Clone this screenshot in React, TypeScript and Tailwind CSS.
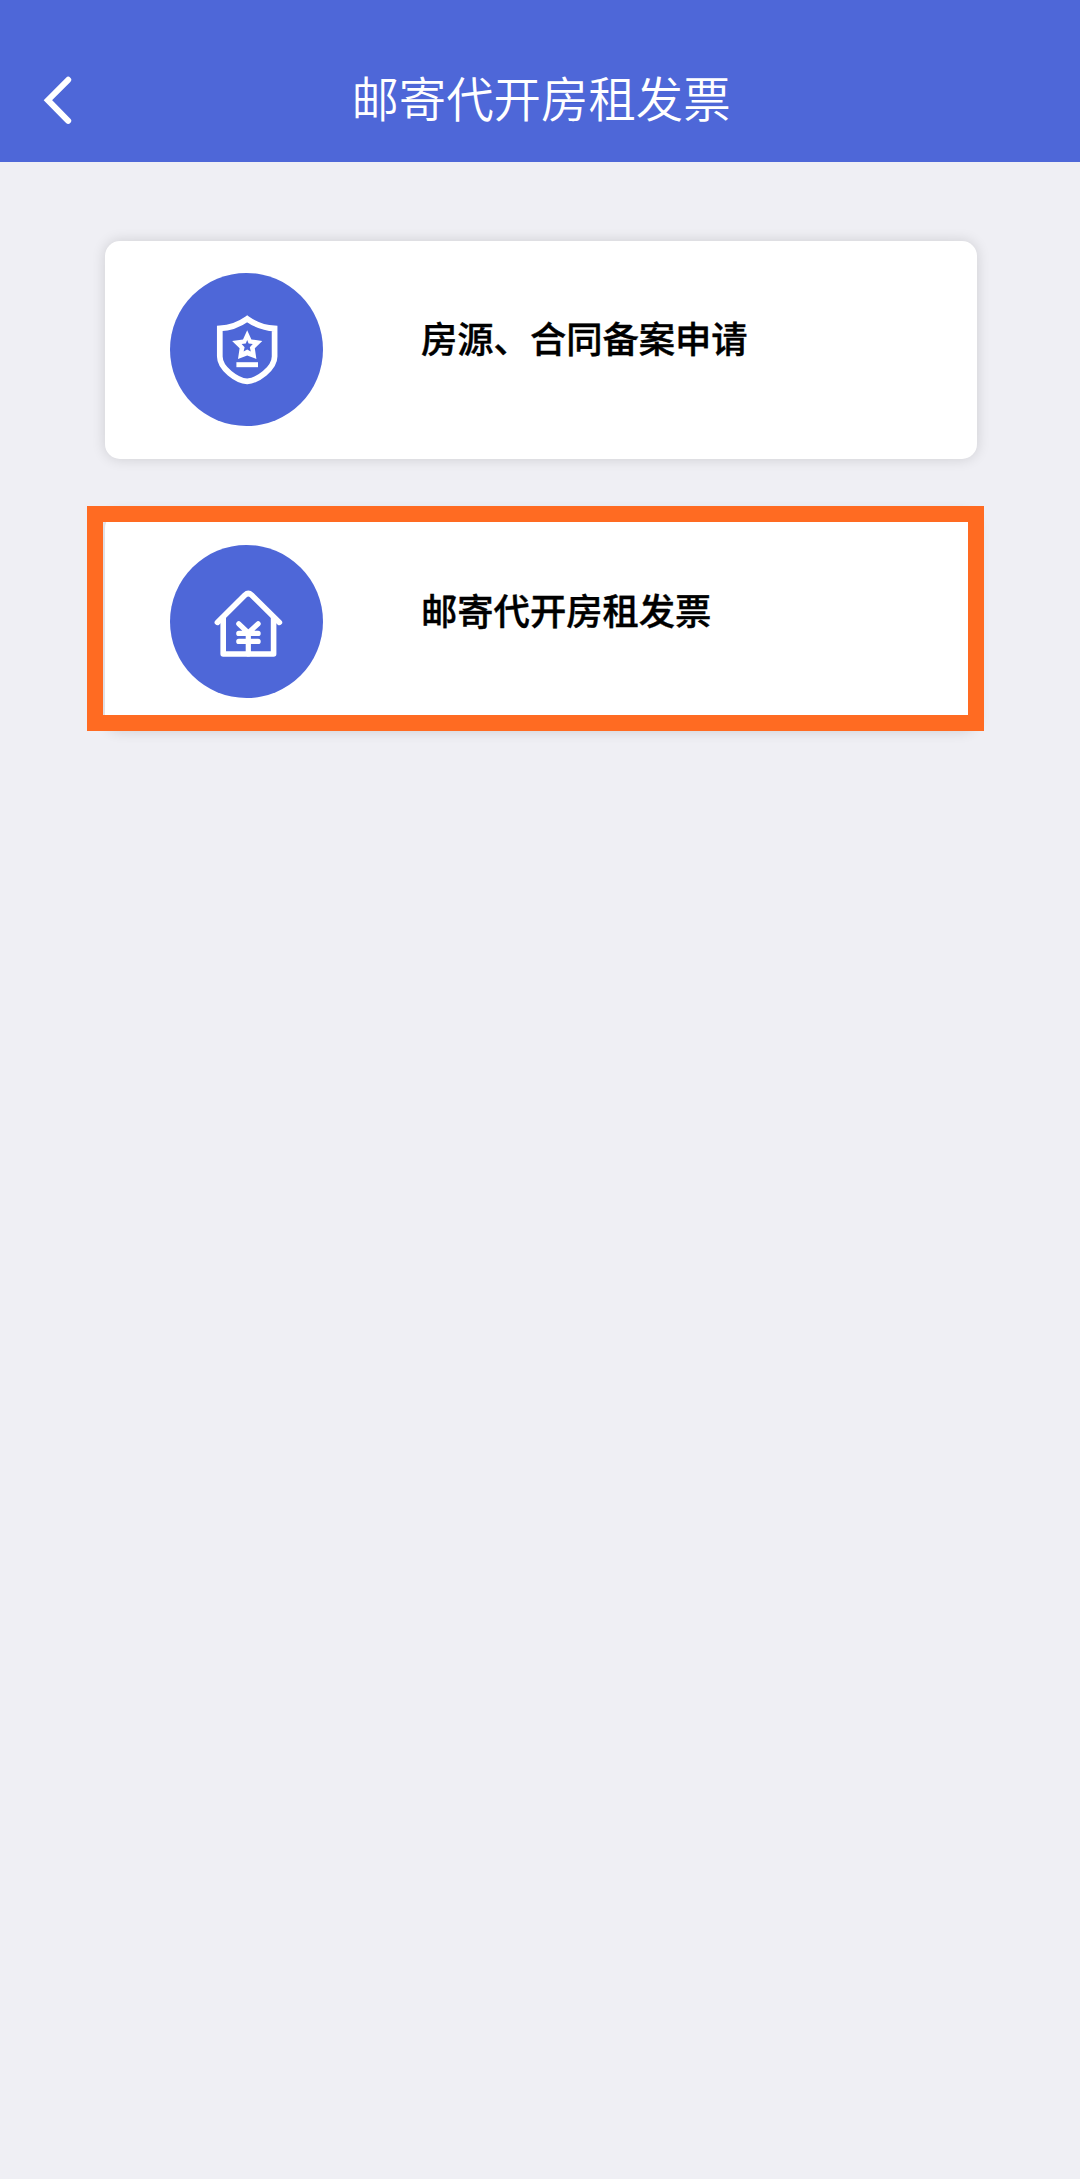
import React from 'react';

interface MenuCardProps {
  title: string;
  icon: React.ReactNode;
}

const BackIcon: React.FC = () => (
  <svg viewBox="0 0 32 50" className="w-8 h-[50px]" fill="none" stroke="white" strokeWidth="6" strokeLinecap="round" strokeLinejoin="miter">
    <path d="M28.2 4.8 7.9 25.2 28.2 45.8" />
  </svg>
);

const ShieldIcon: React.FC = () => (
  <svg viewBox="0 0 153 153" className="w-full h-full" fill="none">
    <path
      d="M77.2 45.8Q64.5 54.8 49.8 55.4V83.5C49.8 95.5 67 107.8 77.2 108.4C87.4 107.8 104.6 95.5 104.6 83.5V55.4Q89.9 54.8 77.2 45.8Z"
      stroke="white"
      strokeWidth="5.7"
    />
    <path
      fill="white"
      fillRule="evenodd"
      d="M77.2 57.2 81.4 66.4 92.3 67.9 84.8 75.3 86.4 86 77.2 82.6 68 86 69.6 75.3 62.1 67.9 73 66.4ZM77.2 67 75.8 70.6 71.6 71 74.6 74.2 73.6 78.4 77.2 76.6 80.8 78.4 79.8 74.2 82.8 71 78.6 70.6Z"
    />
    <path d="M66.4 91.7H88" stroke="white" strokeWidth="5" />
  </svg>
);

const HouseIcon: React.FC = () => (
  <svg viewBox="0 0 153 153" className="w-full h-full" fill="none" stroke="white" strokeWidth="5.6" strokeLinecap="round" strokeLinejoin="round">
    <path d="M47.4 77.4 75 50Q78.3 47 81.6 50L109.4 77.4" />
    <path d="M53.2 73V109H103.6V73" />
    <path strokeWidth="5.2" d="M68.8 78.8 78.3 87.8 88.1 78.8M68.8 88.4H88.1M68.8 96.4H88.1M78.3 87.8V109" />
  </svg>
);

const MenuCard: React.FC<MenuCardProps> = ({ title, icon }) => (
  <div className="flex h-[218px] w-[872px] rounded-[15px] bg-white pl-[65px] pt-8 shadow-[0_0_14px_rgba(0,0,0,0.14)]">
    <div className="h-[153px] w-[153px] shrink-0 rounded-full bg-[#4e67d8]">{icon}</div>
    <h2 className="ml-[98px] mt-9 text-[36.3px] leading-[56px] font-medium whitespace-nowrap text-black [-webkit-text-stroke:0.4px_black]">{title}</h2>
  </div>
);

const App: React.FC = () => {
  return (
    <div className="min-h-[2179px] w-[1080px] overflow-hidden bg-[#efeff4] font-['Noto_Sans_CJK_SC',sans-serif]">
      <header className="grid h-[162px] grid-cols-[80px_1fr_80px] items-center bg-[#4e67d8] pt-[38px]">
        <button className="ml-10" aria-label="返回">
          <BackIcon />
        </button>
        <h1 className="relative -top-[3px] left-px text-center text-[47.4px] leading-[70px] font-[350] whitespace-nowrap text-white">邮寄代开房租发票</h1>
      </header>

      <main className="flex flex-col gap-[54px] pl-[105px] pt-[79px]">
        <MenuCard title="房源、合同备案申请" icon={<ShieldIcon />} />
        <div className="relative">
          <MenuCard title="邮寄代开房租发票" icon={<HouseIcon />} />
          {/* Highlight frame */}
          <div className="absolute -left-[18px] -top-[7.5px] h-[225px] w-[897px] border-[16px] border-[#ff6b22]" />
        </div>
      </main>
    </div>
  );
};

export default App;
